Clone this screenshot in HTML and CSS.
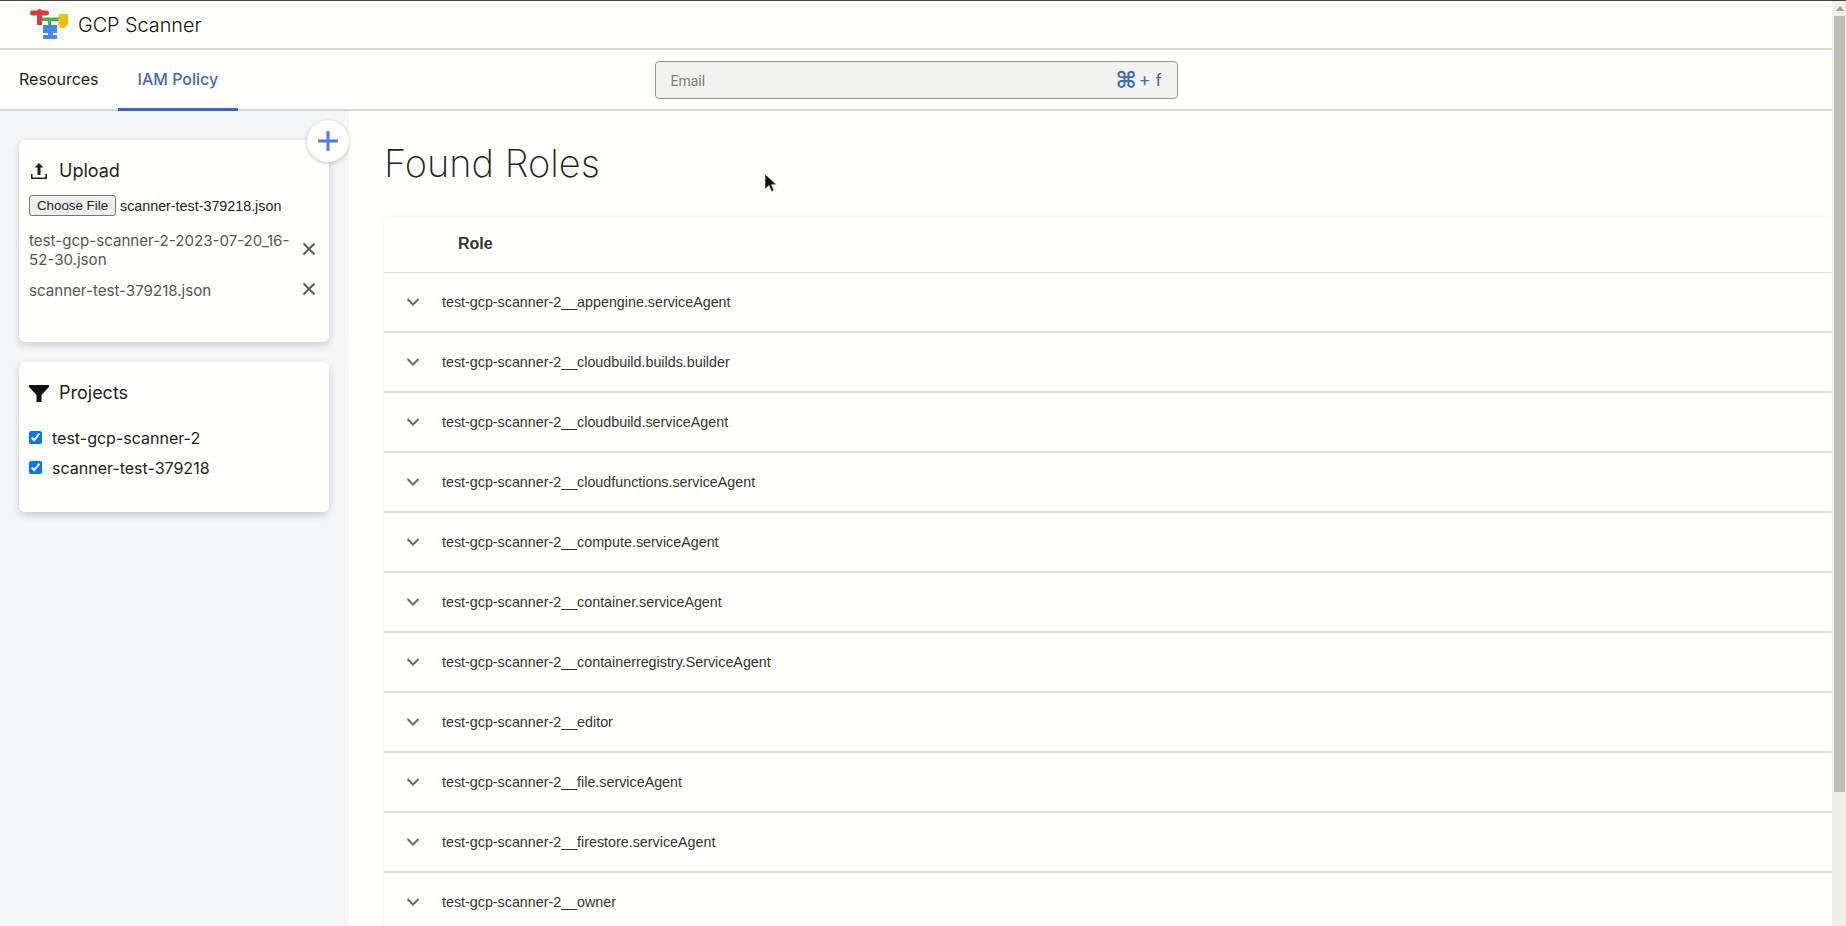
FILE: index.html
```html
<!DOCTYPE html>
<html lang="en">
<head>
    <meta charset="UTF-8">
    <title>GCP Scanner</title>
    <link rel="stylesheet" href="styles.css">
</head>
<body>

    <div class="page">
        <header class="top-bar">
            <svg class="logo" width="40" height="32" viewBox="0 0 40 32">
                <rect x="1" y="3.500" width="19" height="5" rx="2.500" fill="#d93a3a"/>
                <circle cx="10.500" cy="4.500" r="2.500" fill="#d93a3a"/>
                <rect x="8" y="6" width="5" height="12" fill="#d93a3a"/>
                <rect x="13" y="10.500" width="17" height="3.500" fill="#4cae5b"/>
                <rect x="19" y="13" width="3" height="5" fill="#4cae5b"/>
                <rect x="14" y="18" width="14" height="8" fill="#4a86e8"/>
                <rect x="19" y="25" width="5" height="4" fill="#4a86e8"/>
                <rect x="14" y="28" width="14" height="4" fill="#4a86e8"/>
                <path d="M30 7h8.500l.5.500V18l-3 1.500V21h-5v-1.500L29 18z" fill="#eebd10"/>
            </svg>
            <span class="app-name">GCP Scanner</span>
        </header>

        <nav class="tab-bar">
            <div class="tabs">
                <a class="tab">Resources</a>
                <a class="tab active">IAM Policy</a>
            </div>
            <div class="search">
                <span class="search-placeholder">Email</span>
                <span class="shortcut"><span class="cmd">⌘</span> + f</span>
            </div>
        </nav>

        <div class="content">
            <aside class="sidebar">
                <button class="add-button" type="button">
                    <svg width="22" height="22" viewBox="0 0 22 22"><path d="M11 1v20M1 11h20" stroke="#4a7fdc" stroke-width="3"/></svg>
                </button>

                <section class="card upload-card">
                    <h3 class="card-title">
                        <svg class="card-icon" width="24" height="24" viewBox="0 0 24 24"><path d="M4.800 15v4.200h14.400V15" fill="none" stroke="#222" stroke-width="1.600"/><path d="M12 4l4.500 4.500h-3V16h-3V8.500h-3z" fill="#222"/></svg>
                        Upload
                    </h3>
                    <div class="file-picker">
                        <span class="file-button">Choose File</span>
                        <span class="file-name">scanner-test-379218.json</span>
                    </div>
                    <ul class="file-list">
                        <li class="file-item">
                            <span>test-gcp-scanner-2-2023-07-20_16-52-30.json</span>
                            <svg class="remove" width="14" height="14" viewBox="0 0 14 14"><path d="M1.500 1.500l11 11M12.500 1.500l-11 11" stroke="#555" stroke-width="1.800"/></svg>
                        </li>
                        <li class="file-item">
                            <span>scanner-test-379218.json</span>
                            <svg class="remove" width="14" height="14" viewBox="0 0 14 14"><path d="M1.500 1.500l11 11M12.500 1.500l-11 11" stroke="#555" stroke-width="1.800"/></svg>
                        </li>
                    </ul>
                </section>

                <section class="card projects-card">
                    <h3 class="card-title">
                        <svg class="card-icon" width="24" height="24" viewBox="0 0 24 24"><path d="M2 4h20v2l-7.500 8v7h-5v-7L2 6z" fill="#111"/></svg>
                        Projects
                    </h3>
                    <label class="project"><input type="checkbox" checked> test-gcp-scanner-2</label>
                    <label class="project"><input type="checkbox" checked> scanner-test-379218</label>
                </section>
            </aside>

            <main class="main">
                <h1 class="page-title">Found Roles</h1>
                <div class="roles">
                    <div class="roles-head">Role</div>
                    <div class="role-row"><svg class="chevron" width="14" height="8" viewBox="0 0 14 8"><path d="M1.500 1l5.500 5.500L12.500 1" fill="none" stroke="#666" stroke-width="2"/></svg>test-gcp-scanner-2__appengine.serviceAgent</div>
                    <div class="role-row"><svg class="chevron" width="14" height="8" viewBox="0 0 14 8"><path d="M1.500 1l5.500 5.500L12.500 1" fill="none" stroke="#666" stroke-width="2"/></svg>test-gcp-scanner-2__cloudbuild.builds.builder</div>
                    <div class="role-row"><svg class="chevron" width="14" height="8" viewBox="0 0 14 8"><path d="M1.500 1l5.500 5.500L12.500 1" fill="none" stroke="#666" stroke-width="2"/></svg>test-gcp-scanner-2__cloudbuild.serviceAgent</div>
                    <div class="role-row"><svg class="chevron" width="14" height="8" viewBox="0 0 14 8"><path d="M1.500 1l5.500 5.500L12.500 1" fill="none" stroke="#666" stroke-width="2"/></svg>test-gcp-scanner-2__cloudfunctions.serviceAgent</div>
                    <div class="role-row"><svg class="chevron" width="14" height="8" viewBox="0 0 14 8"><path d="M1.500 1l5.500 5.500L12.500 1" fill="none" stroke="#666" stroke-width="2"/></svg>test-gcp-scanner-2__compute.serviceAgent</div>
                    <div class="role-row"><svg class="chevron" width="14" height="8" viewBox="0 0 14 8"><path d="M1.500 1l5.500 5.500L12.500 1" fill="none" stroke="#666" stroke-width="2"/></svg>test-gcp-scanner-2__container.serviceAgent</div>
                    <div class="role-row"><svg class="chevron" width="14" height="8" viewBox="0 0 14 8"><path d="M1.500 1l5.500 5.500L12.500 1" fill="none" stroke="#666" stroke-width="2"/></svg>test-gcp-scanner-2__containerregistry.ServiceAgent</div>
                    <div class="role-row"><svg class="chevron" width="14" height="8" viewBox="0 0 14 8"><path d="M1.500 1l5.500 5.500L12.500 1" fill="none" stroke="#666" stroke-width="2"/></svg>test-gcp-scanner-2__editor</div>
                    <div class="role-row"><svg class="chevron" width="14" height="8" viewBox="0 0 14 8"><path d="M1.500 1l5.500 5.500L12.500 1" fill="none" stroke="#666" stroke-width="2"/></svg>test-gcp-scanner-2__file.serviceAgent</div>
                    <div class="role-row"><svg class="chevron" width="14" height="8" viewBox="0 0 14 8"><path d="M1.500 1l5.500 5.500L12.500 1" fill="none" stroke="#666" stroke-width="2"/></svg>test-gcp-scanner-2__firestore.serviceAgent</div>
                    <div class="role-row"><svg class="chevron" width="14" height="8" viewBox="0 0 14 8"><path d="M1.500 1l5.500 5.500L12.500 1" fill="none" stroke="#666" stroke-width="2"/></svg>test-gcp-scanner-2__owner</div>
                </div>
            </main>
        </div>
    </div>

    <div class="scrollbar">
        <div class="scroll-up"></div>
        <div class="scroll-thumb"></div>
    </div>

    <!-- mouse pointer caught in the screenshot -->
    <svg class="pointer" width="13" height="20" viewBox="0 0 13 20"><path d="M1 1v15l4-3.500 2.500 6 2.500-1-2.500-5.800H12.500z" fill="#111" stroke="#eee" stroke-width=".6"/></svg>

</body>
</html>
```

FILE: styles.css
```css
* {
    box-sizing: border-box;
}

html,
body {
    height: 100%;
}

body {
    margin: 0;
    display: flex;
    overflow: hidden;
    border-top: 1px solid #44463f;
    background-color: #fffffb;
    color: #222;
    font-family: 'Inter', 'Liberation Sans', sans-serif;
}

.page {
    flex: 1;
    min-width: 0;
    display: flex;
    flex-direction: column;
}

.top-bar {
    height: 49px;
    flex: none;
    display: flex;
    align-items: center;
    padding-left: 29px;
    border-bottom: 2px solid #d5d8dc;
}

.logo {
    margin-top: -3px;
}

.app-name {
    margin-left: 9px;
    font-size: 19.800px;
    font-weight: 300;
    color: #111;
}

.tab-bar {
    height: 61px;
    flex: none;
    position: relative;
    display: flex;
    justify-content: center;
    align-items: center;
    border-bottom: 2px solid #d5d8dc;
}

.tabs {
    position: absolute;
    left: 0;
    top: 0;
    bottom: -2px;
    display: flex;
}

.tab {
    display: flex;
    align-items: center;
    padding: 0 20px;
    font-size: 16px;
    color: #222;
    border-bottom: 3px solid transparent;
}

.tab:first-child {
    padding: 0 19px;
}

.tab.active {
    color: #3f68c2;
    font-weight: 500;
    border-bottom-color: #3566cc;
}

.search {
    width: 523px;
    height: 38px;
    display: flex;
    justify-content: space-between;
    align-items: center;
    padding: 0 15px;
    background-color: #f2f3f1;
    border: 1px solid #96968f;
    border-radius: 4px;
}

.search-placeholder {
    font-family: 'Roboto', sans-serif;
    font-size: 14px;
    color: #7d7872;
    padding-top: 2px;
}

.shortcut {
    font-family: 'Roboto', sans-serif;
    font-size: 17px;
    word-spacing: 2px;
    color: #3f68c2;
    display: flex;
    align-items: center;
    gap: 3px;
}

.cmd {
    font-family: 'DejaVu Sans', sans-serif;
    font-size: 23px;
    line-height: 24px;
    font-weight: bold;
}

.content {
    flex: 1;
    min-height: 0;
    display: flex;
}

.sidebar {
    width: 349px;
    flex: none;
    position: relative;
    padding: 29px 20px 0 19px;
    background-color: #f4f6f7;
}

.add-button {
    position: absolute;
    top: 9px;
    right: 0;
    width: 42px;
    height: 42px;
    display: flex;
    align-items: center;
    justify-content: center;
    padding: 0;
    border: none;
    border-radius: 50%;
    background-color: #fffffb;
    box-shadow: 0 1px 4px rgba(0, 0, 0, 0.25);
}

.card {
    background-color: #fffffb;
    border-radius: 6px;
    padding: 0 10px;
    box-shadow: 0 3px 8px rgba(0, 0, 0, 0.18);
}

.upload-card {
    height: 202px;
    margin-bottom: 20px;
}

.projects-card {
    height: 150px;
}

.card-title {
    margin: 0;
    display: flex;
    align-items: center;
    gap: 8px;
    font-size: 18px;
    font-weight: 400;
    line-height: 24px;
    padding-top: 19px;
}

.card-icon {
    margin-left: -2px;
}

.file-picker {
    display: flex;
    align-items: center;
    margin-top: 12px;
    font-family: 'Liberation Sans', sans-serif;
    font-size: 14.300px;
    color: #222;
}

.file-button {
    height: 21px;
    width: 87px;
    display: flex;
    align-items: center;
    justify-content: center;
    margin-right: 4px;
    font-size: 13.330px;
    background-color: #efefef;
    border: 1px solid #767676;
    border-radius: 3px;
}

.file-list {
    list-style: none;
    margin: 15px 0 0;
    padding: 0;
}

.file-item {
    display: flex;
    justify-content: space-between;
    align-items: center;
    padding-right: 3px;
    margin-bottom: 12px;
    font-size: 15.100px;
    line-height: 19px;
    color: #555;
}

.file-item span {
    width: 262px;
}

.remove {
    margin-top: -2px;
}

.file-item:last-child .remove {
    margin-top: -4px;
}

.projects-card .card-title {
    margin-bottom: 18px;
}

.project {
    display: flex;
    align-items: center;
    height: 30px;
    font-size: 16px;
    color: #222;
}

.project input {
    margin: -2px 10px 0 0;
    width: 13px;
    height: 13px;
}

.main {
    flex: 1;
    min-width: 0;
    padding: 0 0 0 35px;
}

.page-title {
    margin: 0;
    height: 106px;
    padding-top: 30px;
    font-size: 38px;
    line-height: 44px;
    font-weight: 200;
    color: #222;
}

.roles {
    border-radius: 4px 4px 0 0;
    box-shadow: 0 0 3px rgba(0, 0, 0, 0.1);
    font-family: 'Liberation Sans', sans-serif;
}

.roles-head {
    height: 56px;
    display: flex;
    align-items: center;
    padding-left: 74px;
    padding-bottom: 2px;
    font-size: 16px;
    font-weight: bold;
    color: #333;
    border-bottom: 1px solid #e2e2de;
}

.role-row {
    height: 60px;
    display: flex;
    align-items: center;
    padding-left: 22px;
    font-size: 14.300px;
    color: #333;
    border-bottom: 2px solid #dfdfdb;
}

.chevron {
    margin-right: 22px;
}

.scrollbar {
    width: 14px;
    flex: none;
    padding: 0 1px 0 2px;
    background-color: #eeeeec;
}

.scroll-up {
    height: 15px;
    display: flex;
    align-items: center;
    justify-content: center;
}

.scroll-up::before {
    content: "";
    border: 4px solid transparent;
    border-top: none;
    border-bottom: 5px solid #a0a09a;
}

.scroll-thumb {
    height: 776px;
    background-color: #bebeb9;
}

.pointer {
    position: absolute;
    left: 764px;
    top: 173px;
}
```
